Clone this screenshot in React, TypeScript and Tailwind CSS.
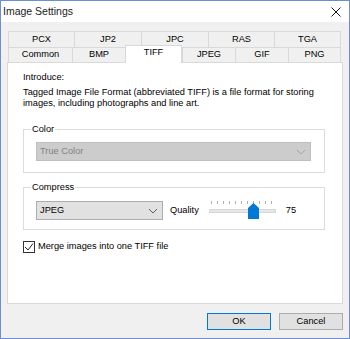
import React from 'react';

const row1 = [
  { label: 'PCX', w: 'w-[66px]' },
  { label: 'JP2', w: 'w-[67px]' },
  { label: 'JPC', w: 'w-[67px]' },
  { label: 'RAS', w: 'w-[66px]' },
  { label: 'TGA', w: 'w-[67px]', last: true },
];

const row2 = [
  { label: 'Common', w: 'w-[64px]' },
  { label: 'BMP', w: 'w-[53px]' },
  { label: 'TIFF', w: 'w-[57px]', active: true },
  { label: 'JPEG', w: 'w-[53px]' },
  { label: 'GIF', w: 'w-[53px]' },
  { label: 'PNG', w: 'w-[53px]', last: true },
];

const Chevron = ({ color }: { color: string }) => (
  <svg width="10" height="6" viewBox="0 0 10 6" fill="none">
    <path d="M1 1 L5 5 L9 1" stroke={color} strokeWidth="1" />
  </svg>
);

const Slider = () => {
  const ticks = Array.from({ length: 11 }, (_, i) => 4 + i * 6);
  return (
    <svg width="70" height="20" viewBox="0 0 70 20">
      {ticks.map(x => (
        <line key={x} x1={x + 0.5} y1="1" x2={x + 0.5} y2="4" stroke="#b0b0b0" strokeWidth="1" />
      ))}
      <rect x="2.5" y="9.5" width="66" height="3" fill="#e7e7e7" stroke="#d6d6d6" />
      <polygon points="41,5 46.5,0 52,5 52,16 41,16" fill="#0078d7" transform="translate(0,3)" />
    </svg>
  );
};

export default function App() {
  return (
    <div className="w-[350px] h-[339px] border border-[#6b8fd3] flex flex-col font-['Liberation_Sans',Arial,sans-serif] text-[9.25px] text-black bg-[#f0f0f0]">
      {/* title bar */}
      <div className="h-[21px] bg-white flex items-center justify-between pl-[2px] pr-[8px]">
        <span className="text-[10.5px] text-[#1a1a1a]">Image Settings</span>
        <svg width="10" height="10" viewBox="0 0 10 10">
          <path d="M0.5 0.5 L9.5 9.5 M9.5 0.5 L0.5 9.5" stroke="#111" strokeWidth="1" />
        </svg>
      </div>

      <div className="flex-1 flex flex-col px-[6px] pt-[9px]">
        {/* tabs */}
        <div className="ml-[1px] flex h-[16px]">
          {row1.map(t => (
            <div
              key={t.label}
              className={`${t.w} h-full border-l border-t border-[#d9d9d9] ${t.last ? 'border-r' : ''} flex items-center justify-center leading-none`}
            >
              {t.label}
            </div>
          ))}
        </div>
        <div className="ml-[1px] flex items-start h-[15px]">
          {row2.map(t =>
            t.active ? (
              <div
                key={t.label}
                className={`${t.w} h-[18px] -mt-[2px] relative z-10 bg-white border-l border-t border-r border-[#d9d9d9] flex items-center justify-center leading-none pb-[3px]`}
              >
                {t.label}
              </div>
            ) : (
              <div
                key={t.label}
                className={`${t.w} h-full border-l border-t border-[#d9d9d9] ${t.last ? 'border-r' : ''} flex items-center justify-center leading-none`}
              >
                {t.label}
              </div>
            )
          )}
        </div>

        {/* panel */}
        <div className="h-[242px] bg-white border border-[#d9d9d9] pl-[15px] pt-[9px] flex flex-col">
          <div className="leading-[11px] mb-[4px]">Introduce:</div>
          <p className="leading-[10.5px] w-[300px]">
            Tagged Image File Format (abbreviated TIFF) is a file format for storing images, including photographs and line art.
          </p>

          <fieldset className="w-[302px] border border-[#dcdcdc] mt-[16px] pl-[12px] pb-[11px]">
            <legend className="leading-[11px] -ml-[5px] px-[1px]">Color</legend>
            <div className="mt-[7px] w-[275px] h-[19px] bg-[#cccccc] border border-[#bfbfbf] flex items-center justify-between pl-[3px] pr-[4px] text-[#838383]">
              <span>True Color</span>
              <Chevron color="#a6a6a6" />
            </div>
          </fieldset>

          <fieldset className="w-[302px] border border-[#dcdcdc] mt-[9px] pl-[12px] pb-[9px]">
            <legend className="leading-[11px] -ml-[5px] px-[1px]">Compress</legend>
            <div className="mt-[8px] flex items-center">
              <div className="w-[127px] h-[19px] bg-[#e1e1e1] border border-[#adadad] flex items-center justify-between pl-[3px] pr-[4px]">
                <span>JPEG</span>
                <Chevron color="#606060" />
              </div>
              <span className="ml-[7px]">Quality</span>
              <div className="ml-[8px] -mt-[1px]">
                <Slider />
              </div>
              <span className="ml-[9px]">75</span>
            </div>
          </fieldset>

          <label className="mt-[10px] flex items-center">
            <span className="w-[12px] h-[12px] border border-[#333] bg-white flex items-center justify-center">
              <svg width="10" height="10" viewBox="0 0 10 10">
                <path d="M1 5 L4 8 L9 1.5" stroke="#222" strokeWidth="1" fill="none" />
              </svg>
            </span>
            <span className="ml-[3px]">Merge images into one TIFF file</span>
          </label>
        </div>

        {/* buttons */}
        <div className="flex justify-end gap-[8px] mt-[9px]">
          <button className="w-[64px] h-[17px] bg-[#e1e1e1] border border-[#0078d7] flex items-center justify-center leading-none">
            OK
          </button>
          <button className="w-[64px] h-[17px] bg-[#e1e1e1] border border-[#adadad] flex items-center justify-center leading-none">
            Cancel
          </button>
        </div>
      </div>
    </div>
  );
}
